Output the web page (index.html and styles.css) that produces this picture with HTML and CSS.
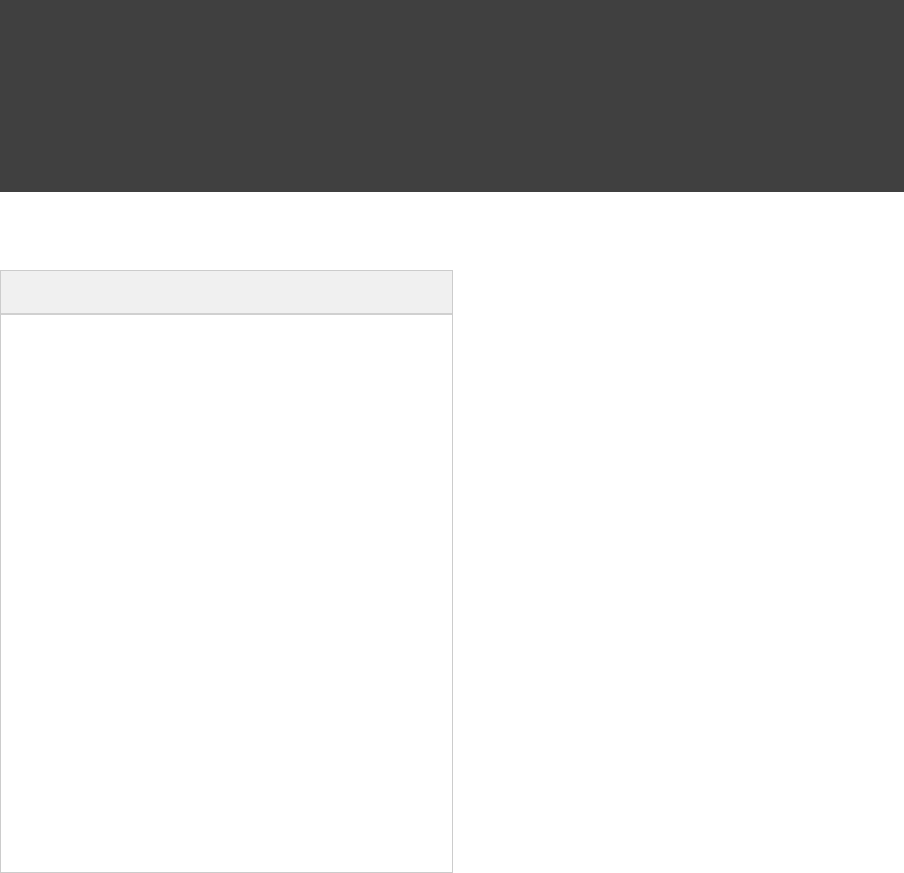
FILE: index.html
```html
<!DOCTYPE html>
<html lang="en">
<head>
  <meta charset="UTF-8">
  <meta name="viewport" content="width=device-width, initial-scale=1.0">
  <title>Panel</title>
  <link rel="stylesheet" href="styles.css">
</head>
<body>

  <div class="top-bar"></div>

  <div class="content">
    <div class="panel">
      <div class="panel-header"></div>
      <div class="panel-body"></div>
    </div>
  </div>

</body>
</html>
```

FILE: styles.css
```css
body {
  font-family: Arial, "Liberation Sans", sans-serif;
  margin: 0;
  padding: 0;
  background-color: #fff;
}

.top-bar {
  height: 192px;
  background-color: #404040;
}

.content {
  padding-top: 78px;
}

.panel {
  width: 451px;
  height: 601px;
  border: 1px solid #cccccc;
  display: flex;
  flex-direction: column;
}

.panel-header {
  height: 42px;
  background-color: #f0f0f0;
  border-bottom: 2px solid #d0d0d0;
}

.panel-body {
  flex: 1;
  background-color: #fff;
}
```
